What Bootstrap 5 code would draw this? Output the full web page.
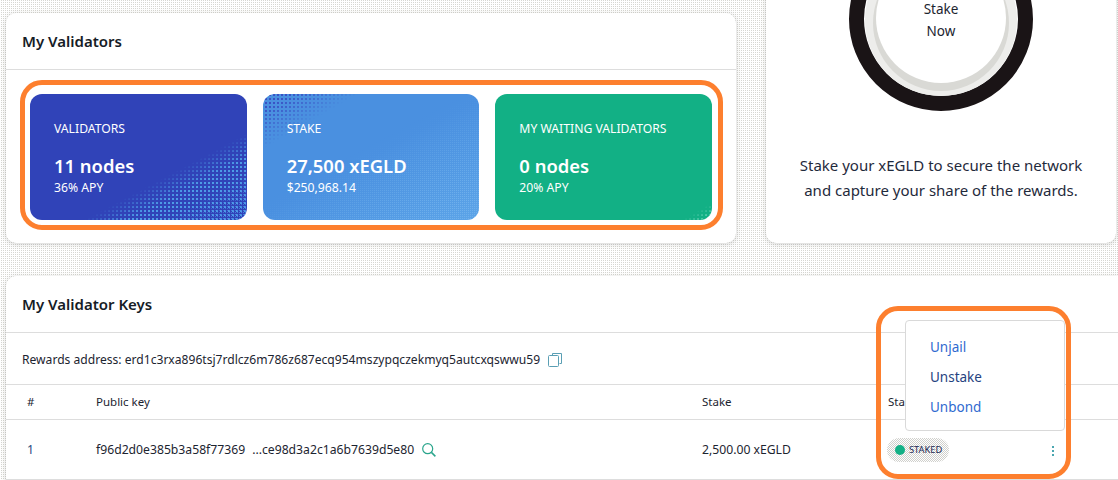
<!doctype html>
<html lang="en">
<head>
<meta charset="utf-8">
<title>My Validators</title>
<link href="https://cdn.jsdelivr.net/npm/bootstrap@5.3.0/dist/css/bootstrap.min.css" rel="stylesheet">
<style>
html,body{height:480px;overflow:hidden}
body{font-family:"Noto Sans","Liberation Sans",sans-serif;color:#1c2430;background:#fff conic-gradient(#d6d6d2 25%,#fff 0) 0 0/2px 2px}
.stage{position:relative;width:1118px;height:480px;overflow:hidden}
.top-row{margin:-73px 0 0 6px;height:316px;gap:30px}
.panel{background:#fff;border:0;border-radius:10px;box-shadow:0 1px 5px rgba(90,90,85,.28)}
.panel-left{width:730px;height:230px}
.panel-right{width:350px;height:316px}
.panel-head{height:57px;padding:0 16px;font-size:15px;font-weight:600;border-bottom:1px solid #ddd;color:#161c26}
.stat-wrap{padding:24px 24px 0;gap:16px}
.stat{position:relative;overflow:hidden;flex:1 1 0;height:126px;border-radius:12px;padding:26px 24px 0;color:#fff}
.stat>*{position:relative;z-index:1}
.stat::before,.stat::after{content:"";position:absolute;inset:0}
.stat-blue{background:#3043b8}
.stat-blue::before{background:conic-gradient(#4d9be6 25%,transparent 0) 0 0/4px 4px;-webkit-mask-image:linear-gradient(152deg,transparent 64%,#000 74%);mask-image:linear-gradient(152deg,transparent 64%,#000 74%)}
.stat-blue::after{background:conic-gradient(#4a7fe2 25%,transparent 0) 0 0/2px 2px;-webkit-mask-image:linear-gradient(152deg,transparent 80%,#000 96%);mask-image:linear-gradient(152deg,transparent 80%,#000 96%)}
.stat-sky{background:linear-gradient(152deg,#4a90e0 50%,#5ca4e8 100%)}
.stat-sky::before{background:conic-gradient(#3a52c4 25%,transparent 0) 0 0/4px 4px;-webkit-mask-image:linear-gradient(150deg,#000 6%,transparent 22%);mask-image:linear-gradient(150deg,#000 6%,transparent 22%)}
.stat-sky::after{background:conic-gradient(#6fb0ec 25%,transparent 0) 0 0/2px 2px;-webkit-mask-image:linear-gradient(152deg,transparent 45%,#000 90%);mask-image:linear-gradient(152deg,transparent 45%,#000 90%)}
.stat-green{background:#12b085}
.stat-green::after{background:conic-gradient(#4bc7a6 25%,transparent 0) 0 0/4px 4px;-webkit-mask-image:linear-gradient(150deg,transparent 93%,#000 97%);mask-image:linear-gradient(150deg,transparent 93%,#000 97%)}
.stat-label{font-size:12.2px;line-height:18px}
.stat-value{font-size:18.4px;font-weight:600;line-height:24px;margin-top:16px}
.stat-note{font-size:12.2px;line-height:18px;margin-top:1px}
.ring{width:184px;height:184px;border:15px solid #1a1416;border-radius:50%;background:#fff;margin:0 auto}
.ring-core{width:130px;height:130px;margin-top:-2px;padding-top:4px;border-radius:50%;background:#fff;font-size:13.5px;line-height:22px;color:#1c2430;box-shadow:0 5px 0 3px #d9d9d5,0 2px 0 11px #ededeb}
.stake-copy{margin:42px 0 0;font-size:15px;line-height:25px;color:#1f2a3c;text-align:center}
.panel-keys{margin:33px 0 0 6px;width:1112px;height:210px;border-radius:10px 0 0 0}
.rewards{height:52px;padding:3px 16px 0;font-size:12.1px;border-bottom:1px solid #ddd;gap:8px}
.key-table{margin:0;font-size:12.2px;color:#1c2430;table-layout:fixed;--bs-table-border-color:#ddd}
.key-table th,.key-table td{font-weight:400;vertical-align:middle;padding:0 0 0 21px}
.key-table thead th{height:34px;font-size:11.5px}
.key-table tbody td{height:60px;padding-top:2px}
.key-table th.cell-key,.key-table td.cell-key{padding-left:0}
.key-table td.cell-num{color:#2a4a80}
.key-tail{margin-left:7px}
.pill{background:conic-gradient(#d0d0cc 25%,#fff 0 50%,#d0d0cc 0 75%,#fff 0) 0 0/2px 2px;height:24px;padding:0 0 0 8px;gap:4px;border-radius:12px;font-size:9.3px;color:#1c2a55;margin-left:-1px;width:62px}
.pill i{display:block;width:10px;height:10px;border-radius:50%;background:#12b085;flex:none}
.kebab{position:absolute;left:1052px;top:445px;width:2px;height:11px;background:radial-gradient(circle,#4aa6b0 1px,transparent 1.2px) 0 0/2px 4px}
.key-menu{position:absolute;left:905px;top:320px;width:160px;height:111px;min-width:0;margin:0;padding:11px 0;border:1px solid #d9d9d9;border-radius:4px;--bs-dropdown-item-padding-x:24px;--bs-dropdown-item-padding-y:0}
.key-menu .dropdown-item{font-size:13.5px;line-height:30px;color:#2f6ad0}
.key-menu .dropdown-item.item-dark{color:#25427f}
.frame{position:absolute;border:5px solid #fd7f2e;pointer-events:none}
.frame-a{left:20px;top:80px;width:703px;height:150px;border-radius:22px}
.frame-b{left:876px;top:306px;width:195px;height:173px;border-radius:22px}
</style>
</head>
<body>
<div class="stage">
  <div class="top-row d-flex align-items-end">
    <section class="panel panel-left">
      <div class="panel-head d-flex align-items-center">My Validators</div>
      <div class="stat-wrap d-flex">
        <div class="stat stat-blue"><div class="stat-label">VALIDATORS</div><div class="stat-value">11 nodes</div><div class="stat-note">36% APY</div></div>
        <div class="stat stat-sky"><div class="stat-label">STAKE</div><div class="stat-value">27,500 xEGLD</div><div class="stat-note">$250,968.14</div></div>
        <div class="stat stat-green"><div class="stat-label">MY WAITING VALIDATORS</div><div class="stat-value">0 nodes</div><div class="stat-note">20% APY</div></div>
      </div>
    </section>
    <section class="panel panel-right">
      <div class="ring d-flex align-items-center justify-content-center">
        <div class="ring-core d-flex align-items-center justify-content-center text-center">Stake<br>Now</div>
      </div>
      <p class="stake-copy">Stake your xEGLD to secure the network<br>and capture your share of the rewards.</p>
    </section>
  </div>
  <section class="panel panel-keys">
    <div class="panel-head d-flex align-items-center">My Validator Keys</div>
    <div class="rewards d-flex align-items-center">
      <span>Rewards address: erd1c3rxa896tsj7rdlcz6m786z687ecq954mszypqczekmyq5autcxqswwu59</span>
      <svg width="14" height="14" viewBox="0 0 14 14" fill="none" stroke="#5a9fb4" stroke-width="1"><path d="M4.5 2.5v-2h9v10h-2"/><rect x=".5" y="2.5" width="10" height="11" rx="1"/></svg>
    </div>
    <table class="table key-table">
      <colgroup><col style="width:90px"><col style="width:606px"><col style="width:186px"><col></colgroup>
      <thead><tr><th>#</th><th class="cell-key">Public key</th><th class="cell-key">Stake</th><th class="cell-key">Status</th></tr></thead>
      <tbody><tr>
        <td class="cell-num">1</td>
        <td class="cell-key"><span class="d-inline-flex align-items-center gap-2"><span>f96d2d0e385b3a58f77369<span class="key-tail">...ce98d3a2c1a6b7639d5e80</span></span>
          <svg width="14" height="14" viewBox="0 0 14 14" fill="none" stroke="#2aa58c" stroke-width="1.2"><circle cx="5.7" cy="5.7" r="5"/><path d="M9.4 9.4l4 4" stroke-width="1.5"/></svg></span></td>
        <td class="cell-key">2,500.00 xEGLD</td>
        <td class="cell-key"><span class="pill d-inline-flex align-items-center">
          <i></i>STAKED</span></td>
      </tr></tbody>
    </table>
  </section>
  <span class="kebab"></span>
  <ul class="dropdown-menu show key-menu">
    <li><a class="dropdown-item" href="#">Unjail</a></li>
    <li><a class="dropdown-item item-dark" href="#">Unstake</a></li>
    <li><a class="dropdown-item" href="#">Unbond</a></li>
  </ul>
  <div class="frame frame-a"></div>
  <div class="frame frame-b"></div>
</div>
<script src="https://cdn.jsdelivr.net/npm/bootstrap@5.3.0/dist/js/bootstrap.bundle.min.js"></script>
</body>
</html>
